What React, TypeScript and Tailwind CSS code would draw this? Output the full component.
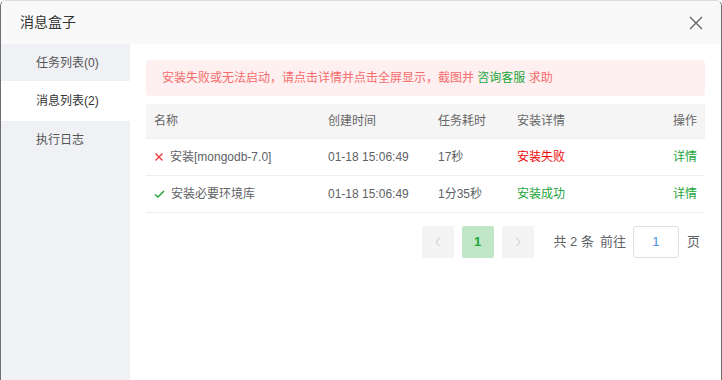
import React from "react";

const font = { fontFamily: '"Liberation Sans", "Noto Sans CJK SC", sans-serif' };

const rows = [
  { ok: false, name: "安装[mongodb-7.0]", time: "01-18 15:06:49", cost: "17秒", status: "安装失败" },
  { ok: true, name: "安装必要环境库", time: "01-18 15:06:49", cost: "1分35秒", status: "安装成功" },
];

const Cross = () => (
  <svg width="10" height="10" viewBox="0 0 10 10" className="shrink-0">
    <path d="M1.5 1.5 L8.5 8.5 M8.5 1.5 L1.5 8.5" stroke="#ef3b3b" strokeWidth="1.4" fill="none" />
  </svg>
);

const Check = () => (
  <svg width="11" height="10" viewBox="0 0 11 10" className="shrink-0">
    <path d="M1 5.5 L4 8 L10 2" stroke="#20a53a" strokeWidth="1.5" fill="none" />
  </svg>
);

export default function App() {
  return (
    <div style={font} className="w-[722px] h-[380px] bg-white overflow-hidden">
      <div className="h-full flex flex-col border-x border-t border-x-[#6f6f6f] border-t-[#dcdcdc] rounded-t-[6px] overflow-hidden">
        {/* header */}
        <div className="h-[43px] shrink-0 flex items-center justify-between bg-[#f9f9f9] pl-[19px] pr-[18px]">
          <span className="text-[14px] text-[#333]">消息盒子</span>
          <svg width="14" height="14" viewBox="0 0 14 14">
            <path d="M1 1 L13 13 M13 1 L1 13" stroke="#666" strokeWidth="1.4" fill="none" />
          </svg>
        </div>

        <div className="flex flex-1 min-h-0">
          {/* sidebar */}
          <div className="w-[129px] shrink-0 bg-[#f0f1f5] text-[12px] text-[#555]">
            <div className="h-[37px] flex items-center pl-[35px]">任务列表(0)</div>
            <div className="h-[40px] flex items-center pl-[35px] bg-white text-[#333]">消息列表(2)</div>
            <div className="h-[37px] flex items-center pl-[35px]">执行日志</div>
          </div>

          {/* content */}
          <div className="flex-1 px-[16px] pt-[16px]">
            <div className="h-[36px] flex items-center px-[16px] bg-[#fef0f0] rounded-[4px] text-[12px] text-[#f56c6c]">
              安装失败或无法启动，请点击详情并点击全屏显示，截图并&nbsp;<span className="text-[#20a53a]">咨询客服</span>&nbsp;求助
            </div>

            <div className="mt-[8px] text-[12px] text-[#606266]">
              <div className="h-[35px] flex items-center bg-[#f5f5f5] border-b border-[#ebeef5] px-[8px] text-[#666]">
                <div className="w-[174px]">名称</div>
                <div className="w-[110px]">创建时间</div>
                <div className="w-[79px]">任务耗时</div>
                <div className="flex-1">安装详情</div>
                <div>操作</div>
              </div>
              {rows.map((r) => (
                <div key={r.name} className="h-[37px] flex items-center border-b border-[#ebeef5] px-[8px]">
                  <div className="w-[174px] flex items-center gap-[6px]">
                    {r.ok ? <Check /> : <Cross />}
                    <span>{r.name}</span>
                  </div>
                  <div className="w-[110px]">{r.time}</div>
                  <div className="w-[79px]">{r.cost}</div>
                  <div className={"flex-1 " + (r.ok ? "text-[#20a53a]" : "text-[#ef0808]")}>{r.status}</div>
                  <div className="text-[#20a53a]">详情</div>
                </div>
              ))}
            </div>

            {/* pagination */}
            <div className="mt-[13px] flex items-center justify-end pr-[5px] text-[13px] text-[#606266]">
              <div className="w-[32px] h-[32px] rounded-[2px] bg-[#f4f4f5] flex items-center justify-center">
                <svg width="8" height="10" viewBox="0 0 8 10">
                  <path d="M5.5 1 L2 5 L5.5 9" stroke="#c0c4cc" strokeWidth="1" fill="none" />
                </svg>
              </div>
              <div className="ml-[8px] w-[32px] h-[32px] rounded-[2px] bg-[#bfe6c6] flex items-center justify-center text-[#20a53a] font-bold text-[13px]">
                1
              </div>
              <div className="ml-[8px] w-[32px] h-[32px] rounded-[2px] bg-[#f4f4f5] flex items-center justify-center">
                <svg width="8" height="10" viewBox="0 0 8 10">
                  <path d="M2.5 1 L6 5 L2.5 9" stroke="#c0c4cc" strokeWidth="1" fill="none" />
                </svg>
              </div>
              <span className="ml-[20px]">共 2 条</span>
              <span className="ml-[6px]">前往</span>
              <div className="ml-[7px] w-[46px] h-[32px] border border-[#dcdfe6] rounded-[3px] flex items-center justify-center text-[#4a8fe0]">
                1
              </div>
              <span className="ml-[8px]">页</span>
            </div>
          </div>
        </div>
      </div>
    </div>
  );
}
